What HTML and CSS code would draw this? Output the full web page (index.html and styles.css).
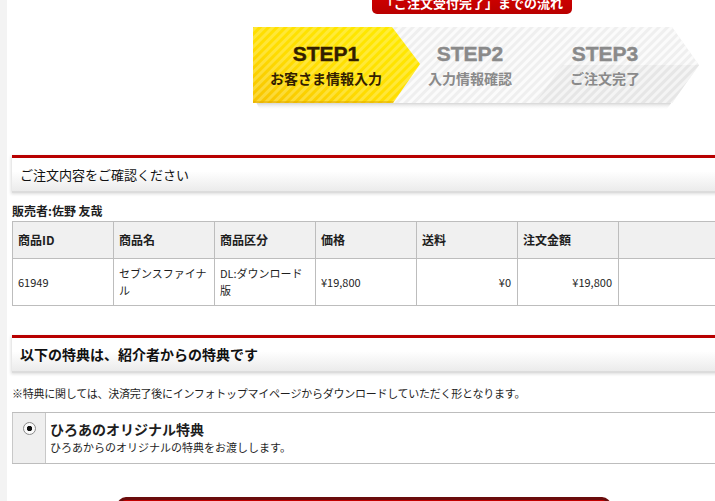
FILE: index.html
```html
<!DOCTYPE html>
<html lang="ja">
<head>
<meta charset="utf-8">
<title>ご注文内容の確認</title>
<link rel="stylesheet" href="styles.css">
</head>
<body>
<div class="wrap">
  <div class="flow-title">「ご注文受付完了」までの流れ</div>

  <div class="steps">
    <svg class="steps-bg" width="460" height="90" viewBox="0 0 460 90" aria-hidden="true">
      <defs>
        <pattern id="stripeW" patternUnits="userSpaceOnUse" width="6" height="6" patternTransform="rotate(45)">
          <rect x="0" y="0" width="3" height="6" fill="#ffffff"/>
        </pattern>
        <pattern id="stripeY" patternUnits="userSpaceOnUse" width="6" height="6" patternTransform="rotate(45)">
          <rect x="0" y="0" width="3" height="6" fill="#fff6a0"/>
        </pattern>
        <linearGradient id="yel" x1="0" y1="1" x2="1" y2="0">
          <stop offset="0" stop-color="#f7c300"/>
          <stop offset="0.4" stop-color="#ffdc00"/>
          <stop offset="1" stop-color="#ffec00"/>
        </linearGradient>
        <linearGradient id="shd" x1="0" y1="0" x2="0" y2="1">
          <stop offset="0" stop-color="#c8c8c8"/>
          <stop offset="1" stop-color="#ffffff" stop-opacity="0"/>
        </linearGradient>
      </defs>
      <polygon points="14,80 430,80 424,88 18,88" fill="url(#shd)"/>
      <polygon points="150,5 430,5 457,43 430,81 151,81" fill="#efefef"/>
      <polygon points="150,5 430,5 457,43 430,81 151,81" fill="url(#stripeW)" opacity="0.75"/>
      <polygon points="321,43 457,43 430,81 293,81" fill="#e6e6e6"/>
      <polygon points="321,43 457,43 430,81 293,81" fill="url(#stripeW)" opacity="0.55"/>
      <polygon points="11,5 150,5 178,42 151,81 11,81" fill="url(#yel)"/>
      <polygon points="11,5 150,5 178,42 151,81 11,81" fill="url(#stripeY)" opacity="0.35"/>
      <polygon points="11,79 152,79 151,81 11,81" fill="#e0a800" opacity="0.5"/>
    </svg>
    <div class="step step-1">
      <span class="step-no">STEP1</span>
      <span class="step-name">お客さま情報入力</span>
    </div>
    <div class="step step-2">
      <span class="step-no">STEP2</span>
      <span class="step-name">入力情報確認</span>
    </div>
    <div class="step step-3">
      <span class="step-no">STEP3</span>
      <span class="step-name">ご注文完了</span>
    </div>
  </div>

  <section class="block block-order">
    <h2 class="block-head">ご注文内容をご確認ください</h2>
    <p class="seller">販売者:佐野 友哉</p>
    <table class="order-table">
      <colgroup>
        <col class="c"><col class="c"><col class="c"><col class="c"><col class="c"><col class="c"><col><col><col>
      </colgroup>
      <thead>
        <tr>
          <th>商品ID</th>
          <th>商品名</th>
          <th>商品区分</th>
          <th>価格</th>
          <th>送料</th>
          <th>注文金額</th>
          <th></th>
          <th></th>
          <th></th>
        </tr>
      </thead>
      <tbody>
        <tr>
          <td>61949</td>
          <td>セブンスファイナル</td>
          <td>DL:ダウンロード版</td>
          <td>¥19,800</td>
          <td class="num">¥0</td>
          <td class="num">¥19,800</td>
          <td></td>
          <td></td>
          <td></td>
        </tr>
      </tbody>
    </table>
  </section>

  <section class="block block-bonus">
    <h2 class="block-head block-head-bold">以下の特典は、紹介者からの特典です</h2>
    <p class="note">※特典に関しては、決済完了後にインフォトップマイページからダウンロードしていただく形となります。</p>
    <div class="option">
      <div class="opt-radio"><span class="radio"></span></div>
      <div class="opt-body">
        <div class="opt-title">ひろあのオリジナル特典</div>
        <div class="opt-desc">ひろあからのオリジナルの特典をお渡しします。</div>
      </div>
    </div>
  </section>

  <div class="submit"><span class="submit-icon"></span></div>
</div>
</body>
</html>
```

FILE: styles.css
```css
html, body {
  margin: 0;
  height: 100%;
  overflow: hidden;
}

body {
  background: linear-gradient(to right, #f3f3f3 0, #f3f3f3 7px, #ffffff 7px);
  font-family: "Noto Sans CJK JP", "Liberation Sans", sans-serif;
  color: #1e1e1e;
}

.wrap {
  width: 920px;
  margin-left: 12px;
}

/* top red tab */
.flow-title {
  width: 200px;
  height: 24px;
  margin: -10px auto 0;
  background: linear-gradient(#d80000, #b90000);
  border-radius: 0 0 5px 5px;
  color: #ffffff;
  font-size: 13px;
  font-weight: bold;
  line-height: 26px;
  text-align: center;
  white-space: nowrap;
  overflow: hidden;
}

/* step bar */
.steps {
  position: relative;
  width: 460px;
  height: 90px;
  margin: 8px auto 0;
  display: flex;
  padding-top: 20px;
  box-sizing: border-box;
}

.steps-bg {
  position: absolute;
  left: 0;
  top: 0;
}

.step {
  position: relative;
  width: 130px;
  display: flex;
  flex-direction: column;
  align-items: center;
  gap: 3px;
}

.step-1 { margin-left: 19px; color: #331e00; }
.step-2 { margin-left: 14px; color: #8a8a8a; }
.step-3 { margin-left: 5px; color: #8a8a8a; }

.step-no {
  font-family: "Liberation Sans", Arial, sans-serif;
  font-size: 21px;
  font-weight: bold;
  line-height: 24px;
  -webkit-text-stroke: 0.4px currentColor;
}

.step-name {
  font-size: 14px;
  font-weight: bold;
  line-height: 18px;
  white-space: nowrap;
}

/* section headers */
.block-order { margin-top: 43px; }
.block-bonus { margin-top: 29px; }

.block-head {
  margin: 0;
  height: 33px;
  border-top: 3px solid #b80000;
  border-bottom: 2px solid #dcdcdc;
  background: linear-gradient(#ffffff 40%, #ebebeb);
  box-shadow: -1px 1px 3px rgba(0, 0, 0, 0.14);
  padding-left: 8px;
  font-size: 13px;
  font-weight: normal;
  line-height: 33px;
  color: #111;
}

.block-head-bold {
  font-size: 14px;
  font-weight: bold;
}

.seller {
  margin: 10px 0 2px;
  font-size: 12px;
  font-weight: bold;
  line-height: 16px;
}

/* table */
.order-table {
  width: 920px;
  border-collapse: collapse;
  table-layout: fixed;
}

.order-table col.c { width: 101px; }

.order-table th,
.order-table td {
  border: 1px solid #bdbdbd;
  text-align: left;
  vertical-align: middle;
  padding: 0 5px;
}

.order-table th {
  height: 37px;
  background: #f0f0f0;
  font-size: 12px;
  font-weight: bold;
  line-height: 16px;
  box-sizing: border-box;
}

.order-table td {
  height: 47px;
  padding-right: 6px;
  font-size: 11px;
  line-height: 17px;
  box-sizing: border-box;
}

.order-table td.num { text-align: right; }

/* bonus */
.note {
  margin: 12px 0 11px;
  font-size: 11px;
  line-height: 16px;
  letter-spacing: -0.25px;
  white-space: nowrap;
}

.option {
  display: flex;
  border-top: 1px solid #bdbdbd;
  border-bottom: 1px solid #bdbdbd;
}

.opt-radio {
  width: 32px;
  flex: none;
  background: #efefef;
  border-left: 1px solid #c8c8c8;
  border-right: 1px solid #c8c8c8;
  display: flex;
  justify-content: center;
  padding-top: 9px;
}

.radio {
  width: 13px;
  height: 13px;
  box-sizing: border-box;
  border-radius: 50%;
  border: 1px solid #8a8a8a;
  background: radial-gradient(circle, #111 0, #111 2.4px, #fafafa 3px);
}

.opt-body {
  padding: 7px 5px 7px 4px;
}

.opt-title {
  font-size: 14px;
  font-weight: bold;
  line-height: 18px;
}

.opt-desc {
  font-size: 11px;
  line-height: 18px;
}

/* submit button (cut off at bottom) */
.submit {
  margin: 33px 0 0 105px;
  width: 494px;
  height: 44px;
  box-sizing: border-box;
  border: 3px solid #6a0c0c;
  border-radius: 9px;
  background: #c30000;
  padding: 2px 0 0 34px;
}

.submit-icon {
  display: block;
  width: 24px;
  height: 24px;
  border-radius: 50%;
  background: #ffffff;
}
```
